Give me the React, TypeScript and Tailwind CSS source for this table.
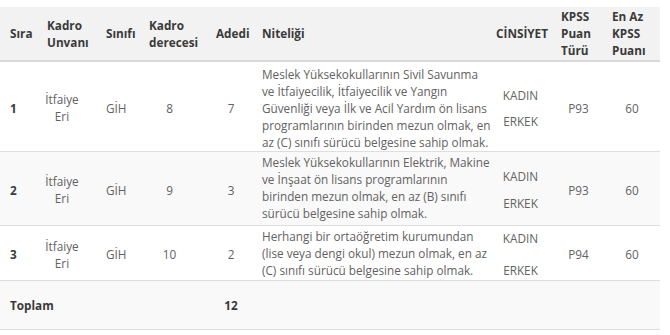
import React from "react";

type Row = {
  no: string;
  grade: string;
  count: string;
  lines: string[];
  puan: string;
  min: string;
  rowH: string;
  textPad: string;
  genderGap: string;
  stripe: boolean;
};

const rows: Row[] = [
  {
    no: "1",
    grade: "8",
    count: "7",
    lines: [
      "Meslek Yüksekokullarının Sivil Savunma",
      "ve İtfaiyecilik, İtfaiyecilik ve Yangın",
      "Güvenliği veya İlk ve Acil Yardım ön lisans",
      "programlarının birinden mezun olmak, en",
      "az (C) sınıfı sürücü belgesine sahip olmak.",
    ],
    puan: "P93",
    min: "60",
    rowH: "h-[90px]",
    textPad: "pt-[3px] pb-0",
    genderGap: "gap-[9px]",
    stripe: false,
  },
  {
    no: "2",
    grade: "9",
    count: "3",
    lines: [
      "Meslek Yüksekokullarının Elektrik, Makine",
      "ve İnşaat ön lisans programlarının",
      "birinden mezun olmak, en az (B) sınıfı",
      "sürücü belgesine sahip olmak.",
    ],
    puan: "P93",
    min: "60",
    rowH: "h-[74px]",
    textPad: "pt-[2px] pb-[3px]",
    genderGap: "gap-[10px]",
    stripe: true,
  },
  {
    no: "3",
    grade: "10",
    count: "2",
    lines: [
      "Herhangi bir ortaöğretim kurumundan",
      "(lise veya dengi okul) mezun olmak, en az",
      "(C) sınıfı sürücü belgesine sahip olmak.",
    ],
    puan: "P94",
    min: "60",
    rowH: "h-[55px]",
    textPad: "pt-[1px] pb-0",
    genderGap: "gap-[15px]",
    stripe: false,
  },
];

const cell = "align-middle border-b border-[#dedede] pt-[3px]";

export default function App() {
  return (
    <div className="w-[670px] h-[335px] bg-white pt-[7px] font-['Open_Sans',sans-serif] text-[11.75px] leading-[17px] text-[#626262]">
      <table className="w-[660px] table-fixed border-separate border-spacing-0">
        <colgroup>
          <col className="w-[39px]" />
          <col className="w-[59px]" />
          <col className="w-[43px]" />
          <col className="w-[67px]" />
          <col className="w-[46px]" />
          <col className="w-[234px]" />
          <col className="w-[65px]" />
          <col className="w-[51px]" />
          <col className="w-[56px]" />
        </colgroup>
        <thead>
          <tr className="bg-[#f2f2f2] text-[#3a3a3a] font-bold text-left">
            {[
              ["Sıra"],
              ["Kadro", "Unvanı"],
              ["Sınıfı"],
              ["Kadro", "derecesi"],
              ["Adedi"],
              ["Niteliği"],
              ["CİNSİYET"],
              ["KPSS", "Puan", "Türü"],
              ["En Az", "KPSS", "Puanı"],
            ].map((h, i) => (
              <th
                key={i}
                className={`h-[55px] align-middle border-b-2 border-[#d9d9d9] font-bold whitespace-nowrap ${
                  i === 0 ? "pl-[10px] pr-0" : "px-2"
                }`}
              >
                {h.map((t, j) => (
                  <div key={j}>{t}</div>
                ))}
              </th>
            ))}
          </tr>
        </thead>
        <tbody>
          {rows.map((r) => (
            <tr key={r.no} className={r.stripe ? "bg-[#f9f9f9]" : "bg-white"}>
              <td className={`${r.rowH} pl-[10px] ${cell} font-bold text-[#3a3a3a]`}>{r.no}</td>
              <td className={`pl-2 ${cell}`}>
                <div className="w-[30px] flex flex-col items-center">
                  <span>İtfaiye</span>
                  <span>Eri</span>
                </div>
              </td>
              <td className={`px-2 ${cell}`}>GİH</td>
              <td className={`pl-2 ${cell}`}>
                <div className="w-[41px] text-center">{r.grade}</div>
              </td>
              <td className={`px-2 ${cell} text-center`}>{r.count}</td>
              <td
                className={`px-2 ${r.textPad} align-middle border-b border-[#dedede] whitespace-nowrap`}
              >
                {r.lines.map((l, i) => (
                  <div key={i}>{l}</div>
                ))}
              </td>
              <td className={`px-2 ${cell}`}>
                <div className={`flex flex-col items-center ${r.genderGap}`}>
                  <span>KADIN</span>
                  <span>ERKEK</span>
                </div>
              </td>
              <td className={`px-2 ${cell} text-center`}>{r.puan}</td>
              <td className={`px-2 ${cell} text-center`}>{r.min}</td>
            </tr>
          ))}
          <tr className="bg-[#f9f9f9] font-bold text-[#3a3a3a]">
            <td colSpan={2} className="h-[49px] pl-[10px] align-middle border-b border-[#dedede]">
              Toplam
            </td>
            <td className="border-b border-[#dedede]" />
            <td className="border-b border-[#dedede]" />
            <td className="px-2 align-middle border-b border-[#dedede] text-center">12</td>
            <td className="border-b border-[#dedede]" />
            <td className="border-b border-[#dedede]" />
            <td className="border-b border-[#dedede]" />
            <td className="border-b border-[#dedede]" />
          </tr>
        </tbody>
      </table>
    </div>
  );
}
